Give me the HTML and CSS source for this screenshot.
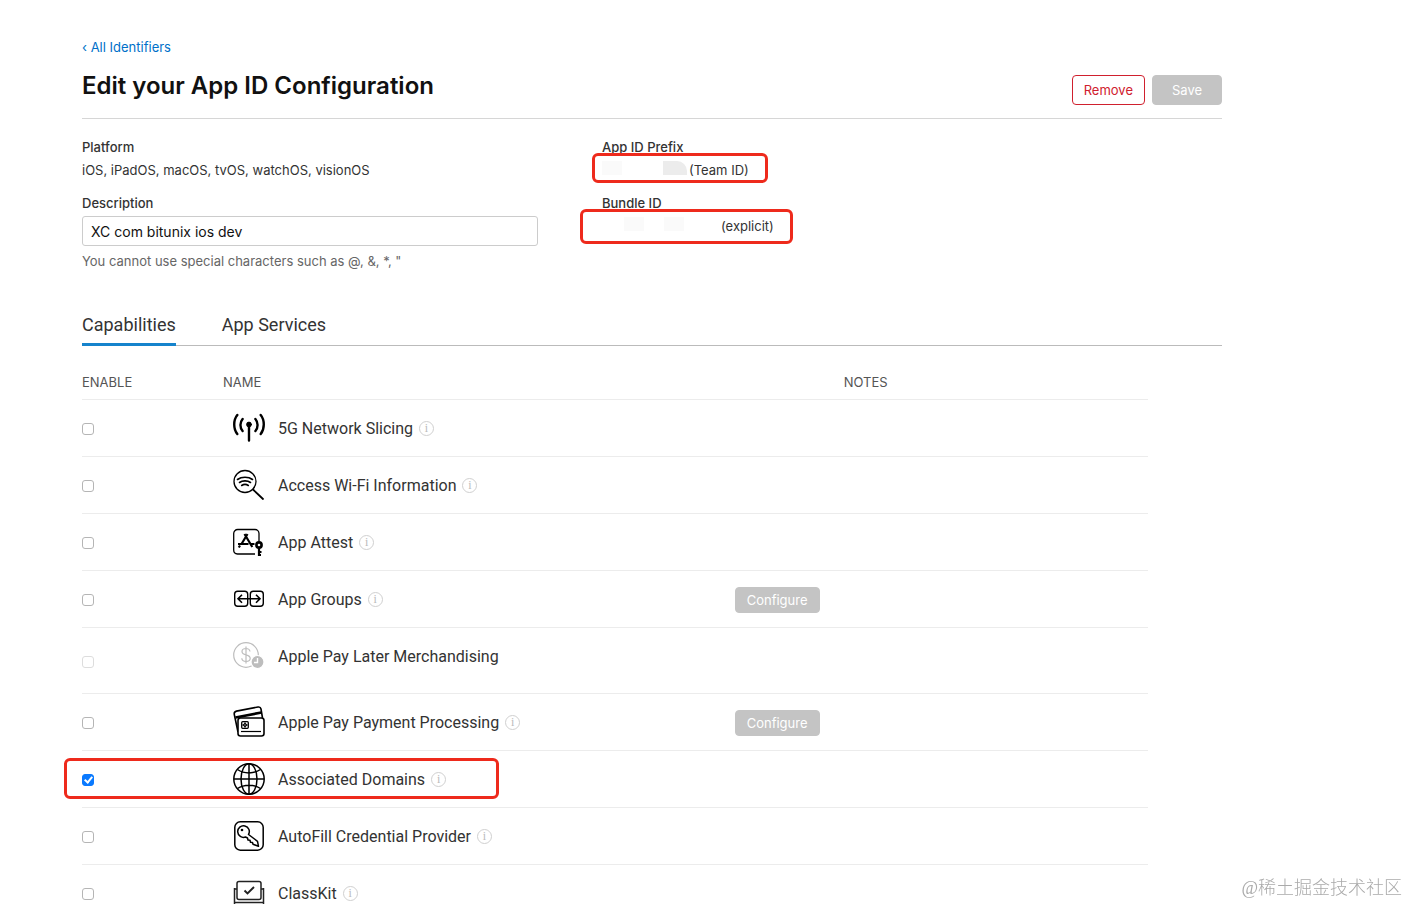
FILE: index.html
```
<!DOCTYPE html>
<html lang="en">
<head>
    <meta charset="UTF-8">
    <title>Edit your App ID Configuration</title>
    <link rel="stylesheet" href="styles.css">
</head>
<body>

<div class="page">
    <a class="back-link" href="#">‹ All Identifiers</a>

    <div class="header">
        <h1>Edit your App ID Configuration</h1>
        <div class="actions">
            <button class="btn btn-remove">Remove</button>
            <button class="btn" disabled>Save</button>
        </div>
    </div>

    <div class="details">
        <div class="details-col">
            <div class="field">
                <div class="label">Platform</div>
                <div class="value">iOS, iPadOS, macOS, tvOS, watchOS, visionOS</div>
            </div>
            <div class="field">
                <label class="label" for="description">Description</label>
                <input class="text-input" type="text" id="description" value="XC com bitunix ios dev">
                <div class="hint">You cannot use special characters such as @, &amp;, *, "</div>
            </div>
        </div>
        <div class="details-col">
            <div class="field">
                <div class="label">App ID Prefix</div>
                <div class="value marked">
                    <span class="masked masked-prefix"><i></i><i class="dark"></i></span>(Team ID)
                    <span class="mark mark-prefix"></span>
                </div>
            </div>
            <div class="field">
                <div class="label">Bundle ID</div>
                <div class="value marked">
                    <span class="masked masked-bundle"><i></i><i></i></span>(explicit)
                    <span class="mark mark-bundle"></span>
                </div>
            </div>
        </div>
    </div>

    <div class="tabs">
        <a class="tab active" href="#">Capabilities</a>
        <a class="tab" href="#">App Services</a>
    </div>

    <table class="capabilities">
        <thead>
            <tr>
                <th class="col-enable">Enable</th>
                <th class="col-name">Name</th>
                <th class="col-action"></th>
                <th>Notes</th>
            </tr>
        </thead>
        <tbody>
            <tr>
                <td><input type="checkbox" id="cap-5g"></td>
                <td>
                    <div class="name">
                        <svg class="icon" viewBox="0 0 32 32" fill="none" stroke="#000" stroke-width="2.4" stroke-linecap="round">
                            <path d="M4.300 3C.2 8 .2 17 4.300 22M27.700 3c4.100 5 4.100 14 0 19M9.600 7c-2.900 3.500-2.900 8.500 0 12M22.400 7c2.900 3.500 2.900 8.500 0 12M16 13v15.500"/>
                            <circle cx="16" cy="12.500" r="2.400" fill="#000" stroke-width="1"/>
                        </svg>
                        <label for="cap-5g">5G Network Slicing</label>
                        <span class="info">i</span>
                    </div>
                </td>
                <td></td>
                <td></td>
            </tr>
            <tr>
                <td><input type="checkbox" id="cap-wifi"></td>
                <td>
                    <div class="name">
                        <svg class="icon" viewBox="0 0 32 32" fill="none" stroke="#000" stroke-width="1.3" stroke-linecap="round">
                            <circle cx="12" cy="12.500" r="11"/>
                            <path d="M20 20.500l10 9.500" stroke-width="1.800"/>
                            <path d="M4.500 10.500c4-3 11-3 15 0M6.500 13.500c3-2.200 8-2.200 11 0M8.700 16.500c2-1.300 4.600-1.300 6.600 0" stroke-width="1.600"/>
                        </svg>
                        <label for="cap-wifi">Access Wi-Fi Information</label>
                        <span class="info">i</span>
                    </div>
                </td>
                <td></td>
                <td></td>
            </tr>
            <tr>
                <td><input type="checkbox" id="cap-attest"></td>
                <td>
                    <div class="name">
                        <svg class="icon" viewBox="0 0 32 32" fill="none" stroke="#000" stroke-width="1.300">
                            <path d="M22 28H4.500A4 4 0 0 1 .7 24V7.500a4 4 0 0 1 4-4H22a4 4 0 0 1 4 4V15"/>
                            <path d="M11.500 8l7.800 13M14.500 8L8.500 18M5 18h10.500M7 19.500l-1.200 2M18 18h3.500" stroke-width="2.200"/>
                            <circle cx="26" cy="19" r="2.600" stroke-width="2.600"/>
                            <path d="M26 22v8M26 26h2.500M26 29h2" stroke-width="2.200"/>
                        </svg>
                        <label for="cap-attest">App Attest</label>
                        <span class="info">i</span>
                    </div>
                </td>
                <td></td>
                <td></td>
            </tr>
            <tr>
                <td><input type="checkbox" id="cap-groups"></td>
                <td>
                    <div class="name">
                        <svg class="icon" viewBox="0 0 32 32" fill="none" stroke="#000" stroke-width="1.400">
                            <rect x="1.700" y="8.200" width="13" height="15" rx="3"/>
                            <rect x="17.300" y="8.200" width="13" height="15" rx="3"/>
                            <path d="M5 15.700h22M9 11.700l-4 4 4 4M23 11.700l4 4-4 4" stroke-width="1.600"/>
                        </svg>
                        <label for="cap-groups">App Groups</label>
                        <span class="info">i</span>
                    </div>
                </td>
                <td><button class="btn btn-small" disabled>Configure</button></td>
                <td></td>
            </tr>
            <tr class="tall">
                <td><input type="checkbox" id="cap-later" disabled></td>
                <td>
                    <div class="name">
                        <svg class="icon" viewBox="0 0 32 32" fill="none" stroke="#bdbdbd" stroke-width="1.200">
                            <circle cx="13" cy="15" r="12.300"/>
                            <path d="M17 11.500c-.3-2-2-3-4-3s-4 1-4 3 1.800 2.800 4 3.300 4.200 1.200 4.200 3.400-2 3.200-4.200 3.200-4-1-4.200-3.200M13 6.500v17"/>
                            <circle cx="24.500" cy="22" r="6.500" fill="#bdbdbd" stroke="#fff"/>
                            <path d="M24.500 18v4.500h-3.500" stroke="#fff" stroke-width="1.400"/>
                        </svg>
                        <label for="cap-later">Apple Pay Later Merchandising</label>
                    </div>
                </td>
                <td></td>
                <td></td>
            </tr>
            <tr>
                <td><input type="checkbox" id="cap-pay"></td>
                <td>
                    <div class="name">
                        <svg class="icon" viewBox="0 0 32 32" fill="none" stroke="#000" stroke-width="1.600">
                            <path d="M5 26L1.300 8.500c-.4-2 .5-3 2.200-3.400L25 1c1.700-.3 2.700.5 3 2l1.500 9"/>
                            <path d="M2.500 11.500L28.500 6.500" stroke-width="2.600"/>
                            <rect x="5" y="12" width="26" height="18" rx="2.500" fill="#fff"/>
                            <path d="M8 25.500h20" stroke-width="1.200"/>
                            <rect x="8.700" y="15.700" width="6.600" height="6.600" rx="1" stroke-width="1.300"/>
                            <path d="M12 16v6M9 19h6" stroke-width=".8"/>
                            <circle cx="12" cy="19" r="1.500" stroke-width="1"/>
                        </svg>
                        <label for="cap-pay">Apple Pay Payment Processing</label>
                        <span class="info">i</span>
                    </div>
                </td>
                <td><button class="btn btn-small" disabled>Configure</button></td>
                <td></td>
            </tr>
            <tr>
                <td class="marked"><input type="checkbox" id="cap-domains" checked><span class="mark mark-domains"></span></td>
                <td>
                    <div class="name">
                        <svg class="icon" viewBox="0 0 32 32" fill="none" stroke="#000" stroke-width="1.500">
                            <circle cx="16" cy="16" r="15.200"/>
                            <ellipse cx="16" cy="16" rx="8" ry="15.200"/>
                            <path d="M16 1v30M1 16h30M4.500 6.500C11 11 21 11 27.500 6.500M4.500 25.500C11 21 21 21 27.500 25.500"/>
                        </svg>
                        <label for="cap-domains">Associated Domains</label>
                        <span class="info">i</span>
                    </div>
                </td>
                <td></td>
                <td></td>
            </tr>
            <tr>
                <td><input type="checkbox" id="cap-autofill"></td>
                <td>
                    <div class="name">
                        <svg class="icon" viewBox="0 0 32 32" fill="none" stroke="#000" stroke-width="1.500" stroke-linejoin="round">
                            <rect x="1.800" y="1.800" width="28.400" height="28.400" rx="5.500"/>
                            <path d="M15.500 14.500a5.800 5.800 0 1 0-3 2.500l2 1 .5 2 2 .3.500 2 2 .2.500 1.800 5.500 2-1-5z"/>
                            <circle cx="9" cy="10" r="1.300" fill="#000" stroke="none"/>
                        </svg>
                        <label for="cap-autofill">AutoFill Credential Provider</label>
                        <span class="info">i</span>
                    </div>
                </td>
                <td></td>
                <td></td>
            </tr>
            <tr>
                <td><input type="checkbox" id="cap-classkit"></td>
                <td>
                    <div class="name">
                        <svg class="icon" viewBox="0 0 32 32" fill="none" stroke="#222" stroke-width="1.500">
                            <rect x="4" y="4.500" width="24" height="18" rx="2"/>
                            <path d="M11.500 13.500l3 3 6.500-6.500" stroke-width="1.900"/>
                            <path d="M1.500 11v18M30.500 11v18M1.500 12H4M28 12h2.500M1.500 25.500h29"/>
                        </svg>
                        <label for="cap-classkit">ClassKit</label>
                        <span class="info">i</span>
                    </div>
                </td>
                <td></td>
                <td></td>
            </tr>
        </tbody>
    </table>
</div>

<div class="watermark">@稀土掘金技术社区</div>

</body>
</html>
```
FILE: styles.css
```
* {
    box-sizing: border-box;
}
body {
    font-family: Inter, "Liberation Sans", sans-serif;
    font-size: 13px;
    margin: 0;
    background: #fff;
    color: #333;
}
.page {
    height: 100vh;
    overflow: hidden;
    padding: 37px 187px 0 82px;
}
.back-link {
    display: block;
    line-height: 20px;
    color: #0070c9;
    text-decoration: none;
}
.header {
    display: flex;
    justify-content: space-between;
    align-items: flex-end;
    padding: 10px 0 13px;
    border-bottom: 1px solid #d6d6d6;
}
h1 {
    margin: 0;
    font-size: 24px;
    line-height: 38px;
    font-weight: 600;
    color: #111;
}
.actions {
    display: flex;
    gap: 7px;
}
.btn {
    min-width: 70px;
    height: 30px;
    padding: 0 11px;
    border: 1px solid #c4c4c4;
    border-radius: 4px;
    background: #c4c4c4;
    color: #fff;
    font-family: inherit;
    font-size: 13px;
}
.btn-remove {
    background: #fff;
    border-color: #d0202e;
    color: #d0202e;
}
.btn-small {
    display: block;
    height: 26px;
    margin-top: 2px;
}
.details {
    display: grid;
    grid-template-columns: 40% 1fr;
    gap: 64px;
    padding-top: 17px;
    line-height: 23px;
}
.field {
    margin-bottom: 10px;
}
.label {
    display: block;
    font-weight: 500;
}
.text-input {
    display: block;
    width: 100%;
    height: 30px;
    margin-top: 1px;
    padding: 0 8px;
    border: 1px solid #ccc;
    border-radius: 3px;
    font-family: inherit;
    font-size: 14px;
    color: #111;
}
.hint {
    margin-top: 4px;
    color: #666;
}

/* red outlines and blanked-out ids */
.marked {
    position: relative;
}
.mark {
    position: absolute;
    border: 3px solid #ee2a1c;
    border-radius: 6px;
    pointer-events: none;
}
.mark-prefix {
    left: -10px;
    top: -6px;
    width: 176px;
    height: 30px;
}
.mark-bundle {
    left: -22px;
    top: -6px;
    width: 213px;
    height: 35px;
}
.mark-domains {
    left: -18px;
    top: 7px;
    width: 435px;
    height: 41px;
}
.masked {
    display: inline-flex;
    justify-content: space-between;
    height: 14px;
}
.masked i {
    width: 20px;
    background: #fafafa;
}
.masked .dark {
    width: 24px;
    background: #ececec;
    border-top-right-radius: 10px;
}
.masked-prefix {
    width: 87px;
    padding-right: 2px;
}
.masked-bundle {
    width: 119px;
    padding: 0 37px 0 22px;
}

.tabs {
    display: flex;
    gap: 46px;
    margin-top: 30px;
    border-bottom: 1px solid #bbb;
}
.tab {
    margin-bottom: -1px;
    padding-bottom: 6px;
    border-bottom: 3px solid transparent;
    font-family: Roboto, "Liberation Sans", sans-serif;
    font-size: 18px;
    line-height: 24px;
    color: #333;
    text-decoration: none;
}
.tab.active {
    border-color: #1583cc;
}

.capabilities {
    width: calc(100% - 74px);
    table-layout: fixed;
    border-collapse: separate;
    border-spacing: 0;
}
.col-enable {
    width: 141px;
}
.col-name {
    width: 48%;
}
.col-action {
    width: 109px;
}
th {
    padding: 26px 0 7px;
    border-bottom: 1px solid #ececec;
    font-weight: 400;
    line-height: 20px;
    text-align: left;
    text-transform: uppercase;
    color: #555;
}
td {
    height: 57px;
    padding: 0;
    border-bottom: 1px solid #ececec;
}
.tall td {
    height: 66px;
    padding-bottom: 9px;
}
.tall td:first-child {
    padding-bottom: 0;
}
.name {
    display: flex;
    align-items: center;
    padding-left: 10px;
    font-family: Roboto, "Liberation Sans", sans-serif;
    font-size: 16px;
}
.icon {
    width: 32px;
    height: 32px;
    margin-right: 13px;
}
.info {
    width: 15px;
    height: 15px;
    margin-left: 6px;
    border: 1px solid #d0d0d0;
    border-radius: 50%;
    font-family: "Liberation Serif", serif;
    font-size: 12px;
    line-height: 13px;
    text-align: center;
    color: #bbb;
}
input[type="checkbox"] {
    appearance: none;
    display: block;
    width: 12px;
    height: 12px;
    margin: 2px 0 0;
    border: 1px solid #b5b5b5;
    border-radius: 3px;
    background: #fff;
}
input[type="checkbox"]:disabled {
    border-color: #ddd;
}
input[type="checkbox"]:checked {
    border-color: #0a7aff;
    background: #0a7aff;
}
input[type="checkbox"]:checked::before {
    content: "";
    display: block;
    width: 3px;
    height: 6px;
    margin: 0 auto;
    border: solid #fff;
    border-width: 0 2px 2px 0;
    box-sizing: content-box;
    transform: rotate(40deg);
}

.watermark {
    position: fixed;
    right: 7px;
    bottom: 3px;
    font-family: "Liberation Serif", "Noto Sans CJK SC", serif;
    font-size: 18px;
    font-weight: 300;
    line-height: 26px;
    color: #aaa;
}
```
